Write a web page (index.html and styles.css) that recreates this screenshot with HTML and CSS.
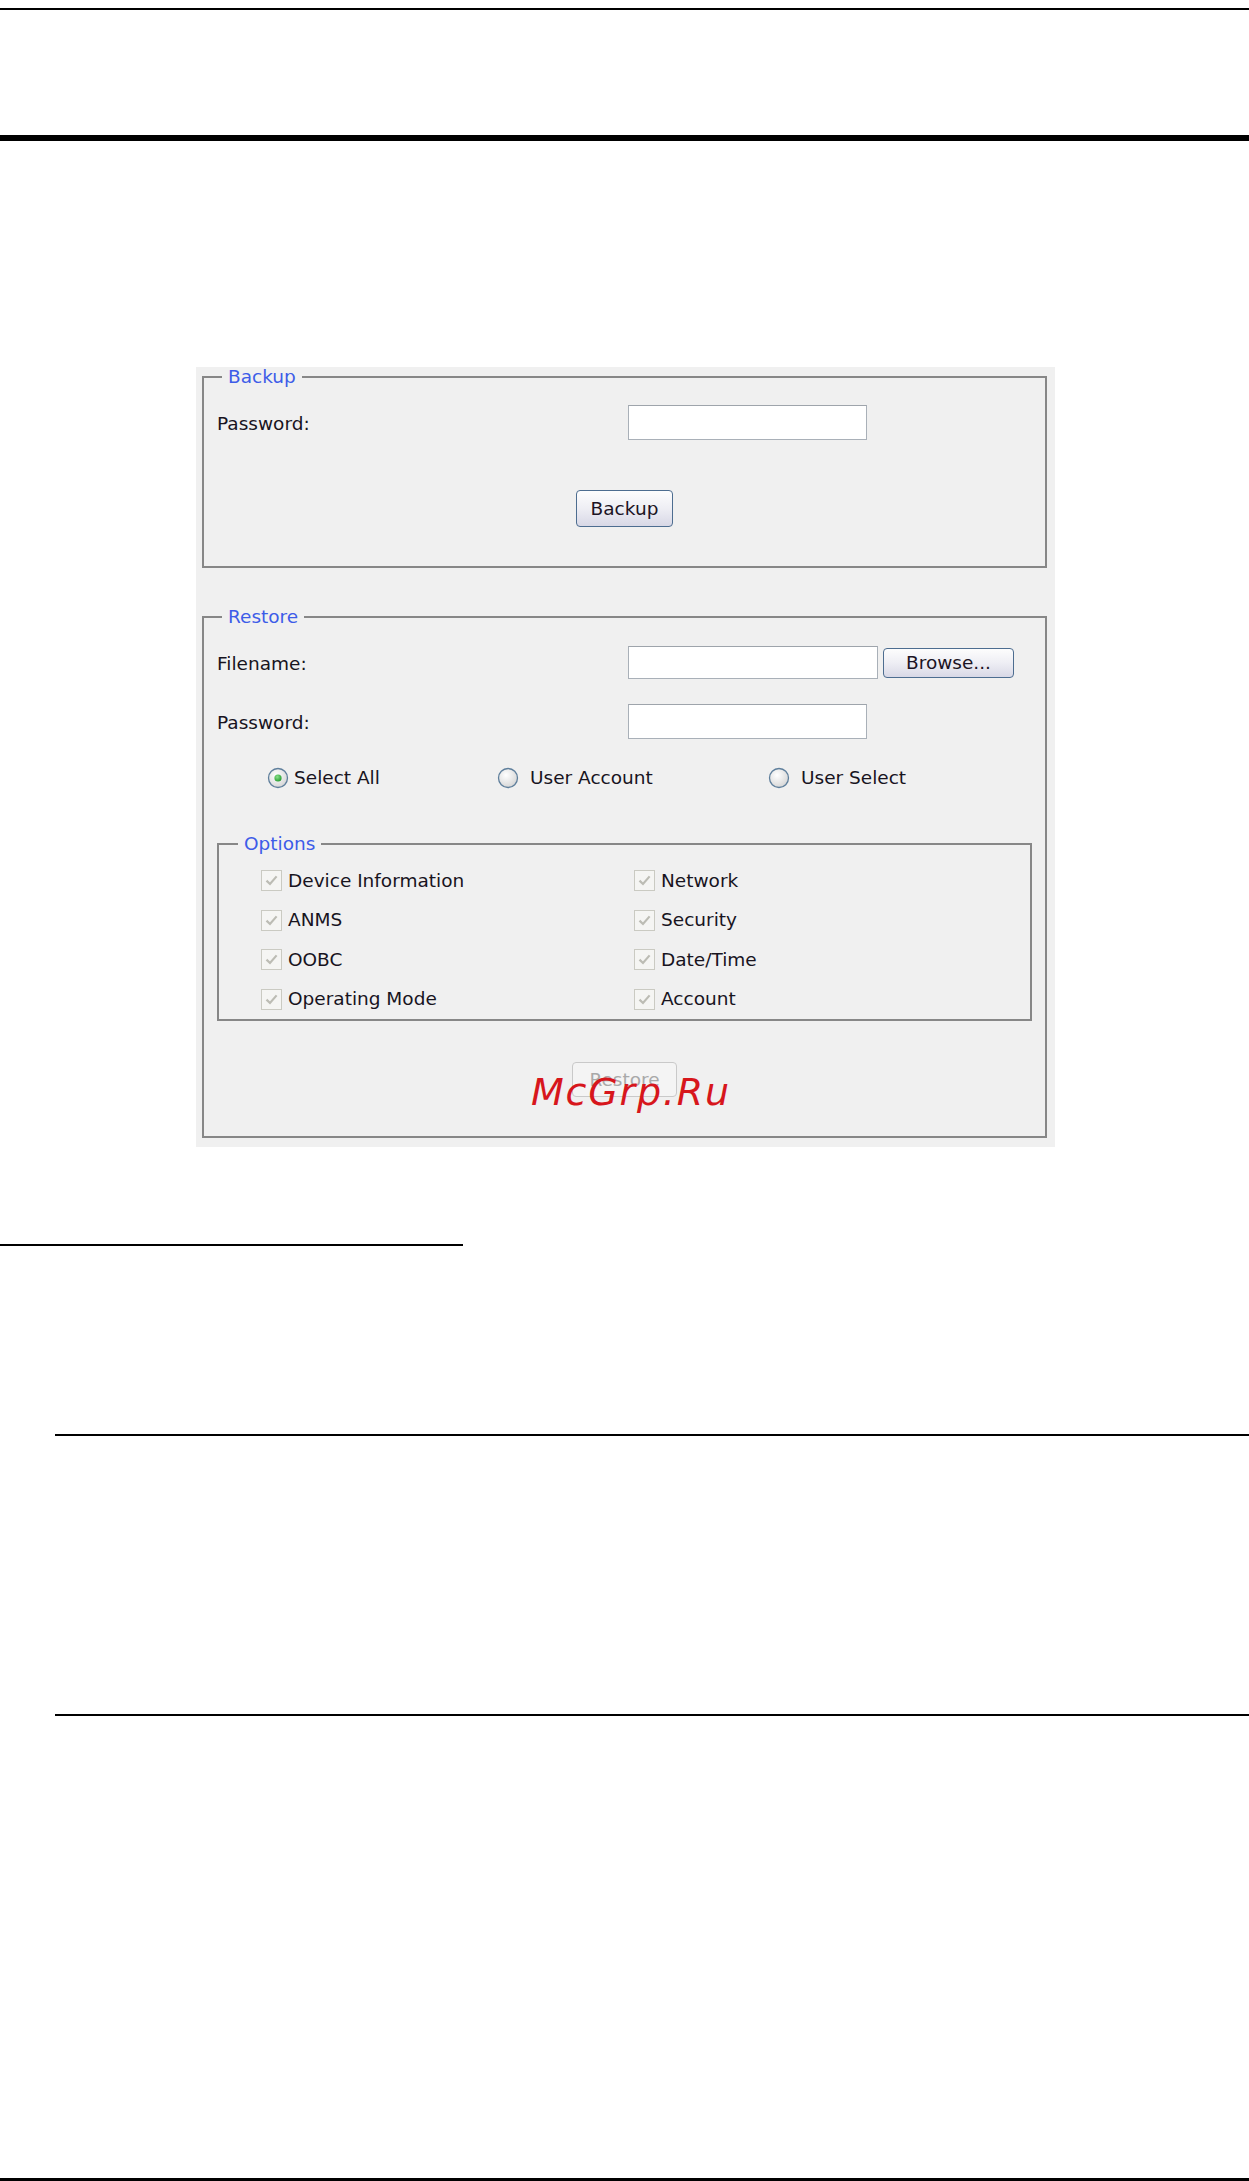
FILE: index.html
```html
<!DOCTYPE html>
<html lang="en">
<head>
<meta charset="utf-8">
<title>Backup / Restore</title>
<link rel="stylesheet" href="styles.css">
</head>
<body>
<div class="rule rule-top"></div>
<div class="rule rule-thick"></div>

<div class="panel">
  <fieldset class="group">
    <legend class="legend">Backup</legend>
    <div class="field-row">
      <span class="label">Password:</span>
      <span class="input input-pw"></span>
    </div>
    <div class="button-row button-row-backup">
      <span class="button button-backup">Backup</span>
    </div>
  </fieldset>

  <fieldset class="group group-restore">
    <legend class="legend">Restore</legend>
    <div class="field-row field-row-file">
      <span class="label">Filename:</span>
      <span class="file-combo">
        <span class="input input-file"></span>
        <span class="button button-browse">Browse...</span>
      </span>
    </div>
    <div class="field-row field-row-pw2">
      <span class="label">Password:</span>
      <span class="input input-pw"></span>
    </div>
    <div class="radio-row">
      <span class="radio-item radio-item-first">
        <svg class="radio" width="22" height="22" viewBox="0 0 22 22"><defs><radialGradient id="rg1" cx="40%" cy="35%" r="70%"><stop offset="0" stop-color="#ffffff"/><stop offset="1" stop-color="#d4d4d4"/></radialGradient><radialGradient id="dot" cx="40%" cy="35%" r="70%"><stop offset="0" stop-color="#8be08b"/><stop offset="1" stop-color="#1f9a2a"/></radialGradient></defs><circle cx="11" cy="11" r="9.5" fill="url(#rg1)" stroke="#5f7f9c" stroke-width="1.3"/><circle cx="11" cy="11" r="3.6" fill="url(#dot)"/></svg>
        <span>Select All</span>
      </span>
      <span class="radio-item">
        <svg class="radio" width="22" height="22" viewBox="0 0 22 22"><defs><radialGradient id="rg2" cx="40%" cy="35%" r="70%"><stop offset="0" stop-color="#ffffff"/><stop offset="1" stop-color="#d4d4d4"/></radialGradient></defs><circle cx="11" cy="11" r="9.5" fill="url(#rg2)" stroke="#5f7f9c" stroke-width="1.3"/></svg>
        <span>User Account</span>
      </span>
      <span class="radio-item">
        <svg class="radio" width="22" height="22" viewBox="0 0 22 22"><defs><radialGradient id="rg3" cx="40%" cy="35%" r="70%"><stop offset="0" stop-color="#ffffff"/><stop offset="1" stop-color="#d4d4d4"/></radialGradient></defs><circle cx="11" cy="11" r="9.5" fill="url(#rg3)" stroke="#5f7f9c" stroke-width="1.3"/></svg>
        <span>User Select</span>
      </span>
    </div>

    <fieldset class="group group-options">
      <legend class="legend legend-options">Options</legend>
      <div class="options-grid">
        <span class="check-item"><span class="checkbox"><svg width="15" height="15" viewBox="0 0 15 15"><path d="M2.5 7.6 L6 11 L12.6 3.4" fill="none" stroke="#bcbcb4" stroke-width="2.2"/></svg></span><span>Device Information</span></span>
        <span class="check-item"><span class="checkbox"><svg width="15" height="15" viewBox="0 0 15 15"><path d="M2.5 7.6 L6 11 L12.6 3.4" fill="none" stroke="#bcbcb4" stroke-width="2.2"/></svg></span><span>Network</span></span>
        <span class="check-item"><span class="checkbox"><svg width="15" height="15" viewBox="0 0 15 15"><path d="M2.5 7.6 L6 11 L12.6 3.4" fill="none" stroke="#bcbcb4" stroke-width="2.2"/></svg></span><span>ANMS</span></span>
        <span class="check-item"><span class="checkbox"><svg width="15" height="15" viewBox="0 0 15 15"><path d="M2.5 7.6 L6 11 L12.6 3.4" fill="none" stroke="#bcbcb4" stroke-width="2.2"/></svg></span><span>Security</span></span>
        <span class="check-item"><span class="checkbox"><svg width="15" height="15" viewBox="0 0 15 15"><path d="M2.5 7.6 L6 11 L12.6 3.4" fill="none" stroke="#bcbcb4" stroke-width="2.2"/></svg></span><span>OOBC</span></span>
        <span class="check-item"><span class="checkbox"><svg width="15" height="15" viewBox="0 0 15 15"><path d="M2.5 7.6 L6 11 L12.6 3.4" fill="none" stroke="#bcbcb4" stroke-width="2.2"/></svg></span><span>Date/Time</span></span>
        <span class="check-item"><span class="checkbox"><svg width="15" height="15" viewBox="0 0 15 15"><path d="M2.5 7.6 L6 11 L12.6 3.4" fill="none" stroke="#bcbcb4" stroke-width="2.2"/></svg></span><span>Operating Mode</span></span>
        <span class="check-item"><span class="checkbox"><svg width="15" height="15" viewBox="0 0 15 15"><path d="M2.5 7.6 L6 11 L12.6 3.4" fill="none" stroke="#bcbcb4" stroke-width="2.2"/></svg></span><span>Account</span></span>
      </div>
    </fieldset>

    <div class="button-row button-row-restore">
      <span class="button button-restore">Restore</span>
    </div>
  </fieldset>

  <div class="watermark">McGrp.Ru</div>
</div>

<div class="rule rule-short"></div>
<div class="rule rule-mid rule-mid-1"></div>
<div class="rule rule-mid rule-mid-2"></div>
<div class="rule rule-bottom"></div>
</body>
</html>
```

FILE: styles.css
```css
html, body {
  margin: 0;
  padding: 0;
  background: #ffffff;
}

body {
  width: 1249px;
  font-family: "DejaVu Sans", Verdana, sans-serif;
}

.rule {
  background: #000000;
}

.rule-top {
  margin-top: 8px;
  height: 2px;
}

.rule-thick {
  margin-top: 125px;
  height: 6px;
}

.panel {
  position: relative;
  margin: 226px 0 0 196px;
  width: 859px;
  box-sizing: border-box;
  padding: 0 8px 9px 6px;
  background: #f0f0f0;
  font-size: 18.5px;
  color: #18141e;
}

.group {
  margin: 0;
  min-width: 0;
  border: 2px solid #878787;
  padding: 18px 13px 39px 13px;
}

.legend {
  margin-left: 5px;
  padding: 0 6px;
  height: 20px;
  line-height: 20px;
  color: #3d5ce8;
}

.field-row {
  display: grid;
  grid-template-columns: 411px auto;
  align-items: center;
  height: 35px;
}

.label {
  line-height: 22px;
  padding-top: 3px;
}

.input {
  display: block;
  box-sizing: border-box;
  height: 35px;
  background: #ffffff;
  border: 1px solid #a9b0b8;
  border-top-color: #9ea4ab;
}

.input-pw {
  width: 239px;
}

.file-combo {
  display: flex;
  align-items: center;
  gap: 5px;
}

.input-file {
  width: 250px;
  height: 33px;
}

.field-row-file {
  height: 33px;
}

.field-row-pw2 {
  margin-top: 25px;
}

.button {
  display: flex;
  align-items: center;
  justify-content: center;
  box-sizing: border-box;
  border: 1px solid #4d6d90;
  border-radius: 4px;
  background: linear-gradient(#fdfdfd, #eeeef4 50%, #d8d8e6);
  color: #1c1424;
  line-height: 22px;
}

.button-row {
  display: flex;
  justify-content: center;
}

.button-row-backup {
  margin-top: 50px;
}

.button-backup {
  width: 97px;
  height: 37px;
}

.button-browse {
  width: 131px;
  height: 30px;
}

.group-restore {
  margin-top: 39px;
  padding-top: 19px;
}

.radio-row {
  margin-top: 27px;
  height: 24px;
  display: grid;
  grid-template-columns: 230px 271px auto;
  padding-left: 50px;
  align-items: center;
}

.radio-item {
  display: flex;
  align-items: center;
  gap: 11px;
  line-height: 22px;
}

.radio-item-first {
  gap: 5px;
}

.radio {
  display: block;
  flex: none;
}

.group-options {
  margin-top: 44px;
  padding: 0;
  border-color: #878787;
}

.legend-options {
  margin-left: 19px;
}

.options-grid {
  display: grid;
  grid-template-columns: 373px auto;
  grid-auto-rows: 39.5px;
  padding: 7px 0 0 42px;
}

.check-item {
  display: flex;
  align-items: center;
  gap: 6px;
  line-height: 22px;
}

.checkbox {
  flex: none;
  display: flex;
  align-items: center;
  justify-content: center;
  box-sizing: border-box;
  width: 21px;
  height: 21px;
  border: 1px solid #cacac2;
  background: #f5f5f3;
}

.checkbox svg {
  display: block;
}

.button-row-restore {
  margin-top: 41px;
}

.button-restore {
  width: 105px;
  height: 35px;
  border-color: #c9c9c9;
  background: #f4f4f4;
  color: #a9a9a9;
}

.watermark {
  position: absolute;
  left: 335px;
  top: 703px;
  font-size: 38px;
  line-height: 44px;
  font-style: italic;
  letter-spacing: 1.8px;
  color: #d7161c;
}

.rule-short {
  margin-top: 97px;
  width: 463px;
  height: 2px;
}

.rule-mid {
  margin-left: 55px;
  height: 2px;
}

.rule-mid-1 {
  margin-top: 188px;
}

.rule-mid-2 {
  margin-top: 278px;
}

.rule-bottom {
  margin-top: 462px;
  height: 3px;
}
```
